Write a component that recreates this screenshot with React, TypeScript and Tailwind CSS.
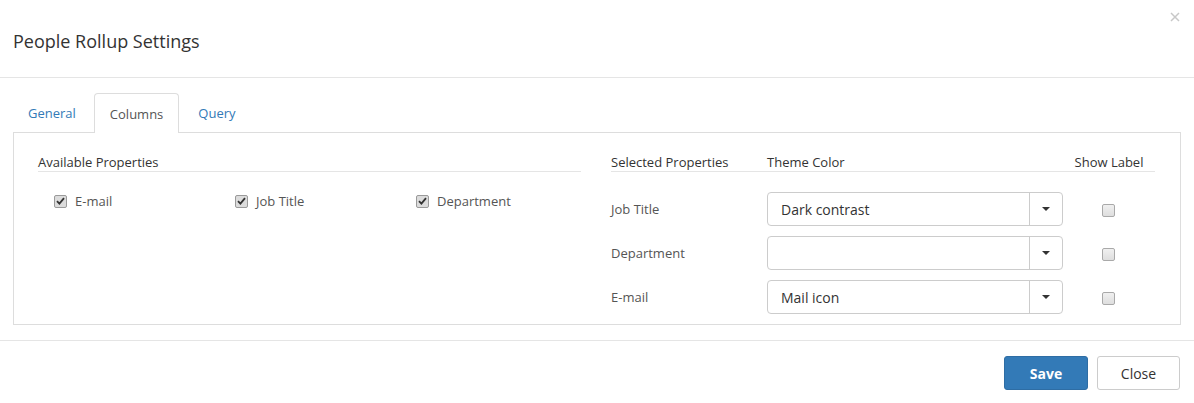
import React from 'react';

const font = "font-['Open_Sans',_'Liberation_Sans',_sans-serif]";

function CheckedBox() {
  return (
    <span className="inline-flex h-[13px] w-[13px] items-center justify-center rounded-[2px] border border-[#9a9a9a] bg-[#dcdcdc]">
      <svg width="9" height="8" viewBox="0 0 9 8">
        <path d="M1 4.2 L3.4 6.6 L8 1.2" fill="none" stroke="#333" strokeWidth="1.8" />
      </svg>
    </span>
  );
}

function EmptyBox() {
  return <span className="inline-block h-[13px] w-[13px] rounded-[2px] border border-[#a9a9a9] bg-gradient-to-b from-[#f0f0f0] to-[#dedede]" />;
}

function Select({ value }: { value: string }) {
  return (
    <div className="flex h-[34px] w-[296px] rounded-[4px] border border-[#ccc] bg-white">
      <div className="flex-1 pl-[13px] text-[14px] leading-[34px] text-[#333]">{value}</div>
      <div className="flex w-[33px] items-center justify-center border-l border-[#ccc]">
        <svg width="8" height="4" viewBox="0 0 8 4">
          <path d="M0 0 L8 0 L4 4 Z" fill="#333" />
        </svg>
      </div>
    </div>
  );
}

const available = ['E-mail', 'Job Title', 'Department'];

const selected = [
  { label: 'Job Title', value: 'Dark contrast' },
  { label: 'Department', value: '' },
  { label: 'E-mail', value: 'Mail icon' },
];

export default function App() {
  return (
    <div className={`relative h-[403px] w-[1194px] bg-white text-[13px] text-[#333] ${font}`}>
      {/* header */}
      <div className="flex h-[78px] items-center border-b border-[#e5e5e5] px-[13px] pt-[5px]">
        <h4 className="text-[18px] text-[#333]">People Rollup Settings</h4>
      </div>
      <svg className="absolute left-[1170px] top-[12px]" width="10" height="10" viewBox="0 0 10 10">
        <path d="M1 1 L9 9 M9 1 L1 9" stroke="#c8c8c8" strokeWidth="1.5" />
      </svg>

      {/* body */}
      <div className="px-[13px] pb-[15px] pt-[15px]">
        <div className="flex h-[40px] border-b border-[#ddd]">
          <div className="mr-[2px] pl-[15px] pr-[16px] pt-[1px] leading-[39px] text-[#337ab7]">General</div>
          <div className="-mb-px mr-[2px] rounded-t-[4px] border border-b-0 border-[#ddd] bg-white px-[15px] pt-[1px] leading-[39px] text-[#555]">
            Columns
          </div>
          <div className="px-[17px] pt-[1px] leading-[39px] text-[#337ab7]">Query</div>
        </div>

        <div className="flex gap-[30px] border border-t-0 border-[#ddd] pb-[10px] pl-[24px] pr-[25px] pt-[20px]">
          {/* available */}
          <div className="w-[543px]">
            <div className="border-b border-[#e5e5e5] leading-[18px] text-[#333]">Available Properties</div>
            <div className="mt-[20px] grid grid-cols-[181px_181px_1fr] pl-[16px] leading-[18px]">
              {available.map((a) => (
                <div key={a} className="flex items-center">
                  <CheckedBox />
                  <span className="ml-[8px] text-[#555]">{a}</span>
                </div>
              ))}
            </div>
          </div>

          {/* selected */}
          <div className="w-[544px]">
            <div className="grid grid-cols-[156px_296px_1fr] border-b border-[#e5e5e5] leading-[18px] text-[#333]">
              <div>Selected Properties</div>
              <div>Theme Color</div>
              <div className="text-center">Show Label</div>
            </div>
            <div className="mt-[20px] flex flex-col gap-[10px]">
              {selected.map((s) => (
                <div key={s.label} className="grid grid-cols-[156px_296px_1fr] items-center">
                  <div className="pt-[1px] text-[#555]">{s.label}</div>
                  <Select value={s.value} />
                  <div className="flex justify-center pr-[1px] pt-[2px]">
                    <EmptyBox />
                  </div>
                </div>
              ))}
            </div>
          </div>
        </div>
      </div>

      {/* footer */}
      <div className="flex justify-end gap-[9px] border-t border-[#e5e5e5] pb-[13px] pr-[14px] pt-[15px]">
        <button className="h-[34px] w-[84px] rounded-[3px] border border-[#2e6da4] bg-[#337ab7] text-[14px] font-bold text-white">
          Save
        </button>
        <button className="h-[34px] w-[83px] rounded-[3px] border border-[#ccc] bg-white text-[14px] text-[#333]">
          Close
        </button>
      </div>
    </div>
  );
}
